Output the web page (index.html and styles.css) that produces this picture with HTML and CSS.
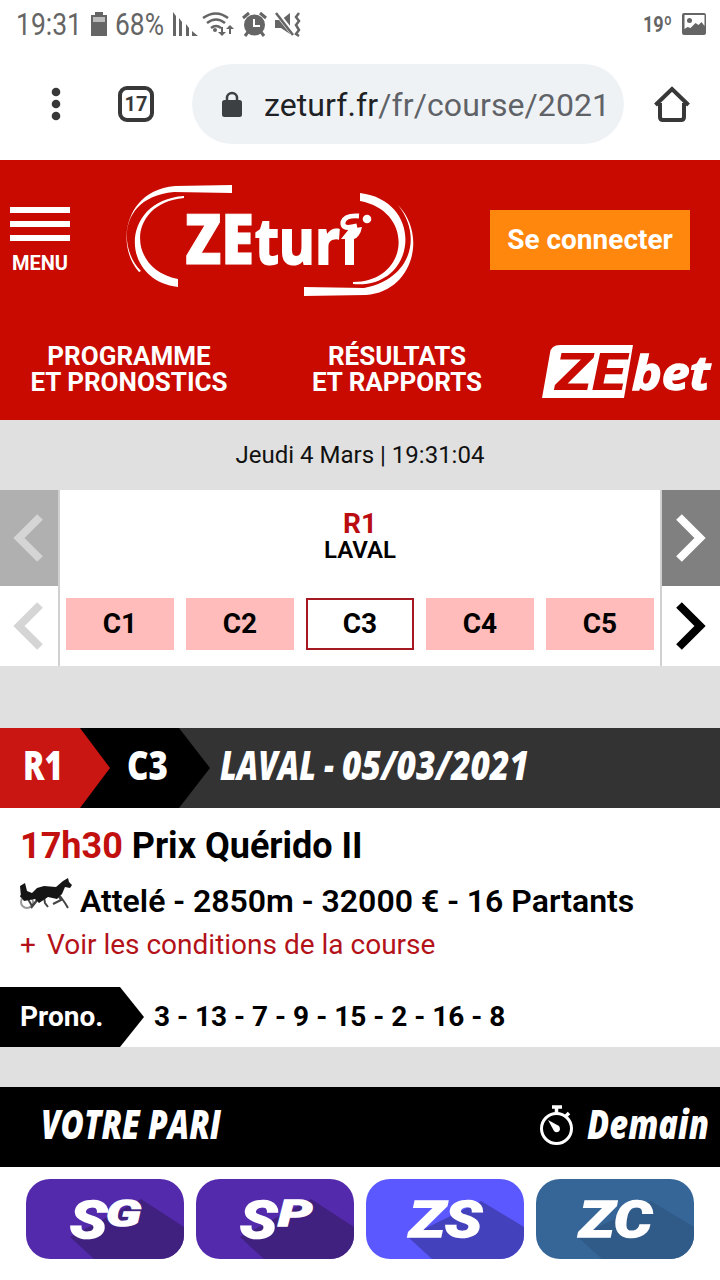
FILE: index.html
```html
<!DOCTYPE html>
<html lang="fr">
<head>
<meta charset="utf-8">
<title>ZEturf</title>
<link rel="stylesheet" href="styles.css">
</head>
<body>
<div class="status">
  <svg width="320" height="48" viewBox="0 0 320 48" class="gray">
    <text x="16" y="35" font-size="31" textLength="66" lengthAdjust="spacingAndGlyphs">19:31</text>
    <path d="M95 12h8v3h4v21H91V15h4z"/><path d="M93 17h12v5H93z" fill="#bbb"/>
    <text x="115" y="35" font-size="31" textLength="49" lengthAdjust="spacingAndGlyphs">68%</text>
    <path d="M173 12l3 4v20h-3zM179 18l3 4v14h-3zM186 24l3 4v8h-3zM192 31l6 5h-6z"/>
    <g fill="none" stroke="#656565" stroke-width="2.5"><path d="M203 18q13-9 25 0M207 23q9-7 18 0M211 28q5-4 10 0"/></g>
    <circle cx="215" cy="30" r="2"/><path d="M221 27h2v5h3l-4 4-4-4h3zM229 34v-5h-3l4-4 4 4h-3v5z"/>
    <circle cx="254.500" cy="25" r="10.500"/><path d="M243 18l6-5M260 13l6 5M248 32l-3 4M261 32l3 4" stroke="#656565" stroke-width="3"/><path d="M254 19v7h6" fill="none" stroke="#fff" stroke-width="2"/>
    <path d="M275 20h6l9-7v21l-9-6h-6z"/><path d="M276 12l18 23" stroke="#fff" stroke-width="5"/><path d="M276 13l17 22" stroke="#656565" stroke-width="2.500"/><path d="M299 13l-3 4 3 4-3 4 3 5-3 4 3 2" fill="none" stroke="#656565" stroke-width="2.500"/>
  </svg>
  <svg width="80" height="48" viewBox="0 0 80 48" class="gray">
    <text x="3" y="32" font-size="22" font-weight="700" textLength="29" lengthAdjust="spacingAndGlyphs">19º</text>
    <path fill-rule="evenodd" d="M44 13h20q2 0 2 2v18q0 2-2 2H44q-2 0-2-2V15q0-2 2-2zM44.500 15v14l3-2 3 1 5-5 3 2 3-3 3 4V15z"/><circle cx="49.500" cy="20.500" r="2.500"/>
  </svg>
</div>
<div class="browser">
  <svg class="dots" width="12" height="34" viewBox="0 0 12 34"><circle cx="6" cy="5" r="4.300"/><circle cx="6" cy="17" r="4.300"/><circle cx="6" cy="29" r="4.300"/></svg>
  <div class="tabs">17</div>
  <div class="url">
    <svg width="20" height="27" viewBox="0 0 20 27"><rect y="9" width="20" height="17" rx="2.500" fill="#3c4043"/><path d="M5 10V7a5 5 0 0 1 10 0v3" fill="none" stroke="#3c4043" stroke-width="2.500"/></svg>
    <span class="address"><b>zeturf.fr</b>/fr/course/2021</span>
  </div>
  <svg class="home" width="36" height="38" viewBox="0 0 36 38"><path d="M6 18v14q0 3 3 3h18q3 0 3-3V18M1.500 20L18 4l16.500 16" fill="none" stroke="#383838" stroke-width="4"/></svg>
</div>
<header>
  <div class="top">
    <div class="menu"><i></i><i></i><i></i><span>MENU</span></div>
    <svg class="logo" width="290" height="116" viewBox="124 182 290 116" fill="#fff">
      <path d="M232 185v8l-58-1C119 197 118 248 141 271l-2 1C115 245 125 190 175 186z"/>
      <path d="M184 196v2C127 203 126 269 178 279v8C119 280 120 200 184 196z"/>
      <path d="M360 193C426 201 417 290 353 284v-2C410 282 415 211 360 201z"/>
      <path d="M398 205C428 236 412 292 366 295l-62 1v-9l60 1C409 280 424 238 398 205z"/>
      <g font-family="Open Sans,sans-serif" stroke="#fff"><text x="185" y="264" font-size="69" font-weight="800" textLength="69" lengthAdjust="spacingAndGlyphs" stroke-width="1">ZE</text>
      <text x="255" y="264" font-size="63" font-weight="700" textLength="85" lengthAdjust="spacingAndGlyphs" stroke-width="2">tur</text></g>
      <path d="M345 265v-26h-4l8-10 13-2q-2 10-8 12v26z"/>
      <path d="M359 216q-14-1-16 6-1 7 9 5l5-1" fill="none" stroke="#fff" stroke-width="5"/>
      <circle cx="367" cy="219" r="4.300"/>
    </svg>
    <button class="login">Se connecter</button>
  </div>
  <nav class="links">
    <a class="program"><span>PROGRAMME</span><span>ET PRONOSTICS</span></a><a class="results"><span>RÉSULTATS</span><span>ET RAPPORTS</span></a>
    <svg width="176" height="60" viewBox="540 342 176 60"><path d="M550 353q1-8 10-8h73l-9 53h-82z" fill="#fff"/><g font-style="italic"><text x="555" y="390" font-size="52" font-weight="800" fill="#c80a00" textLength="71" lengthAdjust="spacingAndGlyphs">ZE</text><text x="632" y="390" font-family="Open Sans,sans-serif" font-size="47" font-weight="700" fill="#fff" stroke="#fff" stroke-width="1.500" textLength="78" lengthAdjust="spacingAndGlyphs">bet</text></g></svg>
  </nav>
</header>
<div class="date">Jeudi 4 Mars | 19:31:04</div>
<section class="picker">
  <div class="side left"><div class="arrow off dim"><svg width="32" height="50"><path d="M27 4L6 25 27 46" stroke="#d5d5d5"/></svg></div><div class="arrow"><svg width="32" height="50"><path d="M27 4L6 25 27 46" stroke="#d5d5d5"/></svg></div></div>
  <div class="mid"><div class="meeting"><b>R1</b><span>LAVAL</span></div><div class="races"><span>C1</span><span>C2</span><span class="current">C3</span><span>C4</span><span>C5</span></div></div>
  <div class="side right"><div class="arrow off"><svg width="32" height="50"><path d="M4 4l21 21L4 46" stroke="#fff"/></svg></div><div class="arrow"><svg width="32" height="50"><path d="M4 4l21 21L4 46" stroke="#000"/></svg></div></div>
</section>
<svg class="racebar" width="720" height="80" viewBox="0 0 720 80">
  <path d="M0 0h720v80H0z" fill="#333"/><path d="M80 0h99l31 40-31 40H80z"/><path d="M0 0h80l30 40-30 40H0z" fill="#ca1612"/>
  <g class="condensed"><text x="23" y="52" textLength="40" lengthAdjust="spacingAndGlyphs">R1</text><text x="127" y="52" textLength="41" lengthAdjust="spacingAndGlyphs">C3</text><text class="slant" x="220" y="52" textLength="96" lengthAdjust="spacingAndGlyphs">LAVAL</text><text class="slant" x="324" y="52" textLength="10" lengthAdjust="spacingAndGlyphs">-</text><text class="slant" x="342" y="52" textLength="187" lengthAdjust="spacingAndGlyphs">05/03/2021</text></g>
</svg>
<section class="info">
  <h1><b>17h30</b> Prix Quérido II</h1>
  <div class="details"><svg width="52" height="34" viewBox="0 0 52 34"><g fill="none" stroke="#444" stroke-width="2"><circle cx="7" cy="24" r="6" stroke="#999"/><path d="M0 18l8 3 4 7 8-10M4 19l8-3 12-2M20 18l-4 6-5 6M24 19l1 6 3 4M38 17l3 5-8 4M40 18l5 7 3 5" /></g><path d="M0 8l5-3 2 8 5 2 5-5 7-2 12 1 7-6 5-3 1 4 3 3-2 3-5-1-3 7-5 5-9-2-9 6-4-4-11 2-3-4z" fill="#151515"/></svg><span>Attelé - 2850m - 32000 € - 16 Partants</span></div>
  <a class="conditions"><i>+</i><span>Voir les conditions de la course</span></a>
</section>
<div class="prono"><b>Prono.</b><span>3 - 13 - 7 - 9 - 15 - 2 - 16 - 8</span></div>
<svg class="betbar" width="720" height="80" viewBox="0 0 720 80">
  <g class="condensed slant"><text x="41" y="52" textLength="180" lengthAdjust="spacingAndGlyphs">VOTRE PARI</text><text x="587" y="52" textLength="122" lengthAdjust="spacingAndGlyphs">Demain</text></g>
  <g fill="none" stroke="#fff"><circle cx="556.500" cy="41.500" r="15" stroke-width="3"/><path d="M552 20h10M556.500 21v6M566 29l3-3" stroke-width="3.500"/></g><path d="M548 33l11 6c3 5-2 8-5 5z" fill="#fff"/>
</svg>
<div class="bets">
  <svg class="sg" viewBox="0 0 158 80"><path class="shade" d="M115 20l43 28v32H68L44 58z"/><text x="44" y="59" font-size="51" textLength="37" lengthAdjust="spacingAndGlyphs">S</text><text x="80" y="47" font-size="36" textLength="35" lengthAdjust="spacingAndGlyphs">G</text></svg>
  <svg class="sg" viewBox="0 0 158 80"><path class="shade" d="M115 20l43 28v32H68L44 58z"/><text x="44" y="59" font-size="51" textLength="37" lengthAdjust="spacingAndGlyphs">S</text><text x="82" y="47" font-size="37" textLength="34" lengthAdjust="spacingAndGlyphs">P</text></svg>
  <svg class="zs" viewBox="0 0 158 80"><path class="shade" d="M115 22l43 26v32H66L42 58z"/><text x="43" y="58" font-size="50" textLength="73" lengthAdjust="spacingAndGlyphs">ZS</text></svg>
  <svg class="zc" viewBox="0 0 158 80"><path class="shade" d="M115 22l43 26v32H66L42 58z"/><text x="43" y="58" font-size="50" textLength="73" lengthAdjust="spacingAndGlyphs">ZC</text></svg>
</div>
</body>
</html>
```
FILE: styles.css
```css
* { box-sizing: border-box; }
body { margin: 0; width: 720px; height: 1280px; overflow: hidden; background: #e0e0e0; font-family: Roboto, sans-serif; color: #000; }
svg { display: block; flex: none; }
.status { display: flex; justify-content: space-between; height: 48px; background: #fff; }
.gray { fill: #656565; }
.browser { display: flex; align-items: center; height: 112px; background: #fff; padding-left: 50px; }
.dots { fill: #383838; }
.tabs { width: 36px; height: 36px; margin-left: 56px; border: 4px solid #383838; border-radius: 9px; color: #383838; font-weight: 700; font-size: 20px; line-height: 28px; text-align: center; }
.url { display: flex; align-items: center; width: 432px; height: 80px; margin-left: 38px; padding-left: 30px; border-radius: 40px; background: #eff2f5; }
.address { margin-left: 22px; padding-top: 2px; font-size: 32px; letter-spacing: .1px; color: #5f6368; white-space: nowrap; }
.address b { color: #202124; font-weight: 400; }
.home { margin-left: 30px; }
header { height: 260px; background: #c80a00; color: #fff; }
.top { height: 160px; display: flex; align-items: flex-start; padding: 22px 30px 0 10px; }
.menu { width: 60px; padding-top: 25px; font-size: 20px; font-weight: 700; text-align: center; }
.menu i { display: block; height: 6px; margin-bottom: 8px; background: #fff; }
.menu span { display: block; line-height: 24px; margin-top: 10px; }
.logo { margin-left: 54px; }
.login { width: 200px; height: 60px; margin: 28px 0 0 auto; padding: 0 0 2px; border: 0; background: #ff870d; color: #fff; font: 700 28px Roboto, sans-serif; }
.links { display: flex; padding-top: 22px; font-size: 26px; line-height: 26px; font-weight: 700; text-align: center; }
.links a { padding-top: 1px; white-space: nowrap; }
.links span { display: block; }
.program { width: 258px; }
.results { width: 278px; }
.links svg { margin-left: 4px; }
.date { height: 70px; line-height: 70px; text-align: center; font-size: 24px; color: #111; }
.picker { display: flex; height: 176px; margin-bottom: 62px; background: #fff; }
.side { width: 60px; }
.left { border-right: 2px solid #d0d0d0; }
.right { border-left: 2px solid #d0d0d0; }
.arrow { height: 80px; display: flex; align-items: center; justify-content: center; }
.arrow.off { height: 96px; background: #808080; }
.arrow.dim { background: #b0b0b0; }
.arrow path { fill: none; stroke-width: 8px; }
.mid { flex: 1; }
.meeting { height: 108px; padding-top: 20px; display: flex; flex-direction: column; align-items: center; }
.meeting b { color: #b90d12; font-size: 28px; line-height: 28px; }
.meeting span { font-size: 24px; line-height: 24px; font-weight: 600; }
.races { display: grid; grid-template-columns: repeat(5, 108px); gap: 12px; padding: 0 6px; }
.races span { height: 52px; line-height: 52px; text-align: center; background: #ffbcba; font-size: 28px; font-weight: 700; }
.races .current { background: #fff; border: 2px solid #a51a22; line-height: 48px; }
.condensed { font-family: "Open Sans", sans-serif; font-weight: 800; font-size: 41px; fill: #fff; }
.slant { font-style: italic; }
.info { height: 179px; background: #fff; padding: 17px 20px 0; }
h1 { margin: 0; font-size: 36px; line-height: 42px; font-weight: 700; }
h1 b { color: #c2100f; font-weight: 700; }
.details { display: flex; height: 50px; margin-top: 11px; font-size: 32px; line-height: 47px; font-weight: 600; white-space: nowrap; }
.details span { margin-left: 8px; }
.conditions { display: flex; color: #b31219; font-size: 28px; line-height: 34px; }
.conditions i { width: 27px; font-style: normal; }
.prono { display: flex; height: 60px; margin-bottom: 40px; background: #fff; font-size: 28px; line-height: 60px; font-weight: 700; }
.prono b { width: 144px; padding-left: 20px; background: #000; color: #fff; font-weight: 700; clip-path: polygon(0 0, 120px 0, 100% 50%, 120px 100%, 0 100%); }
.prono span { margin-left: 10px; }
.betbar { background: #000; }
.bets { display: flex; gap: 12px; height: 113px; padding: 12px 26px; background: #fff; }
.bets svg { width: 158px; height: 80px; border-radius: 24px; font: italic 800 50px Roboto, sans-serif; fill: #fff; }
.bets text { stroke: #fff; stroke-width: 1.500px; }
.sg { background: #542aad; }
.sg .shade { fill: #40217f; }
.zs { background: #5c58ff; }
.zs .shade { fill: #4441bd; }
.zc { background: #366698; }
.zc .shade { fill: #305a87; }
```
